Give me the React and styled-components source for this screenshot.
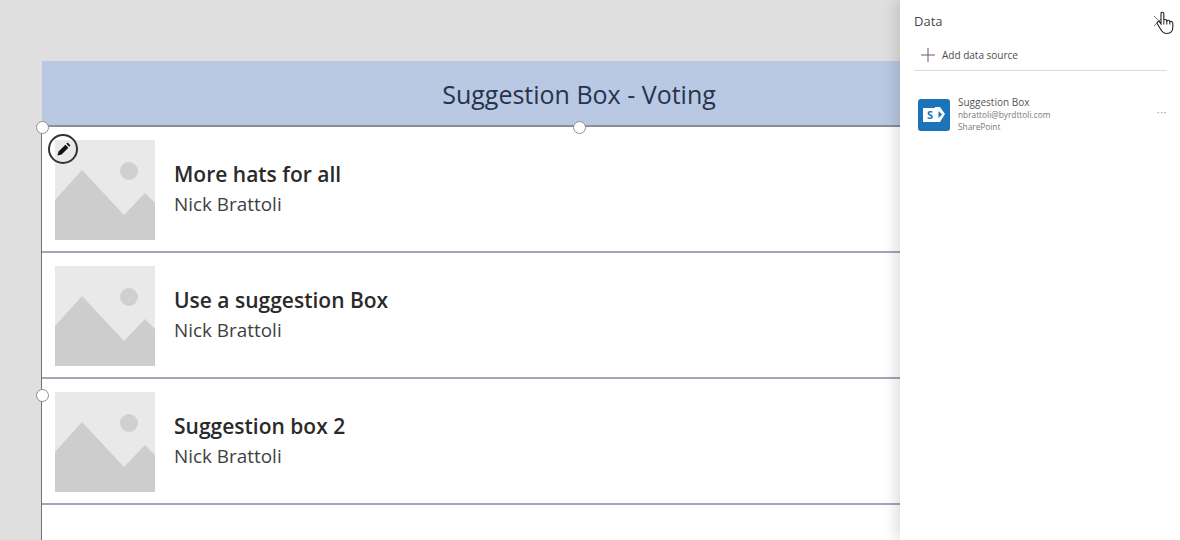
import React from "react";
import styled, { createGlobalStyle } from "styled-components";

const Global = createGlobalStyle`
  html, body { margin: 0; padding: 0; background: #dfdfdf; }
  body { font-family: "Open Sans", "Liberation Sans", sans-serif; overflow: hidden; }
`;
const Page = styled.div`
  display: flex; width: 1180px; height: 540px; overflow: hidden; background: #dfdfdf;
`;
const Canvas = styled.main`
  flex: 1; min-width: 0; padding: 61px 0 0 41px; box-sizing: border-box;
`;
const Screen = styled.div`
  position: relative; height: 479px; display: flex; flex-direction: column;
`;
const Header = styled.header`
  height: 65px; flex: none; margin-left: 1px; background: #b9c9e3; display: flex; align-items: center; justify-content: center;
  padding-left: 216px; box-sizing: border-box;
  font-size: 25px; color: #27334b; white-space: nowrap;
`;
const Gallery = styled.div`
  flex: 1; background: #fff; border-left: 1px solid #6f727a; border-top: 2px solid #8b8e99; margin-top: -1px; display: flex; flex-direction: column;
`;
const Row = styled.div`
  height: 126px; flex: none; box-sizing: border-box; border-bottom: 2px solid #a3a6b8;
  display: flex; align-items: flex-start; padding: 13px 0 0 13px; gap: 19px;
`;
const Thumb = styled.svg`
  width: 100px; height: 100px; flex: none; display: block;
`;
const RowText = styled.div`
  display: flex; flex-direction: column; padding-top: 20px;
`;
const RowTitle = styled.div`
  font-size: 21px; font-weight: 600; line-height: 28px; color: #2a2a2a; white-space: nowrap;
`;
const RowSub = styled.div`
  font-size: 18.9px; line-height: 26px; margin-top: 3px; color: #3f3f3f; white-space: nowrap;
`;
const Handle = styled.span`
  position: absolute; width: 11px; height: 11px; border-radius: 50%; background: #fff; border: 1px solid #8f8f8f;
  left: ${p => p.$x}px; top: ${p => p.$y}px;
`;
const EditBadge = styled.div`
  position: absolute; left: 7px; top: 73px; width: 30px; height: 30px; box-sizing: border-box; border-radius: 50%;
  border: 2px solid #333; display: flex; align-items: center; justify-content: center;
`;
const Panel = styled.aside`
  position: relative; width: 280px; flex: none; height: 540px; background: #fff; box-shadow: -4px 0 14px rgba(0,0,0,.14);
  padding: 0 13px 0 14px; box-sizing: border-box; color: #444;
`;
const PanelHead = styled.div`
  height: 41px; display: flex; align-items: center; justify-content: space-between; font-size: 13px; color: #4a4a4a; padding-right: 3px;
`;
const AddBar = styled.div`
  display: flex; align-items: center; gap: 7px; height: 27px; padding: 0 0 2px 7px;
  border-bottom: 1px solid #dcdcdc; font-size: 10px; color: #4d4d4d;
`;
const Source = styled.div`
  display: flex; align-items: flex-start; margin-top: 27px; padding-left: 4px; position: relative;
`;
const SourceIcon = styled.svg`
  width: 32px; height: 32px; flex: none; margin-top: 1px;
`;
const SourceText = styled.div`
  margin-left: 8px; display: flex; flex-direction: column; margin-top: -2px;
`;
const SourceName = styled.div`
  font-size: 10px; line-height: 13px; color: #555;
`;
const SourceMeta = styled.div`
  font-size: 8.3px; line-height: 11.5px; color: #777;
`;
const More = styled.div`
  position: absolute; right: 0; top: 9px; font-size: 11px; line-height: 10px; letter-spacing: .5px; color: #999;
`;
const Cursor = styled.svg`
  position: absolute; left: 255px; top: 11px; width: 20px; height: 24px;
`;

function Placeholder() {
  return (
    <Thumb viewBox="0 0 100 100">
      <rect width="100" height="100" fill="#e9e9e9" />
      <circle cx="74" cy="31" r="9" fill="#d0d0d0" />
      <path d="M0 60 L27 30 L69 75 L90 53 L100 63 V100 H0 Z" fill="#cdcdcd" />
    </Thumb>
  );
}

const rows = [
  "More hats for all",
  "Use a suggestion Box",
  "Suggestion box 2",
];

export default function App() {
  return (
    <Page>
      <Global />
      <Canvas>
        <Screen>
          <Header>Suggestion Box - Voting</Header>
          <Gallery>
            {rows.map(t => (
              <Row key={t}>
                <Placeholder />
                <RowText>
                  <RowTitle>{t}</RowTitle>
                  <RowSub>Nick Brattoli</RowSub>
                </RowText>
              </Row>
            ))}
          </Gallery>
          <Handle $x={-5} $y={60} />
          <Handle $x={532} $y={60} />
          <Handle $x={-5} $y={328} />
          <EditBadge>
            <svg width="15" height="15" viewBox="0 0 16 16">
              <path d="M1.5 14.5 L2.8 10 L10 2.8 L13.2 6 L6 13.2 Z" fill="#111" />
              <path d="M11 1.8 L12.4 .6 L15.4 3.6 L14.2 5 Z" fill="#111" />
            </svg>
          </EditBadge>
        </Screen>
      </Canvas>
      <Panel>
        <PanelHead>
          <span>Data</span>
          <svg width="10" height="10" viewBox="0 0 10 10">
            <path d="M0 0 L10 10 M10 0 L0 10" stroke="#777" strokeWidth="1" />
          </svg>
        </PanelHead>
        <AddBar>
          <svg width="14" height="14" viewBox="0 0 14 14">
            <path d="M7 0 V14 M0 7 H14" stroke="#6b5a66" strokeWidth="1" />
          </svg>
          <span>Add data source</span>
        </AddBar>
        <Source>
          <SourceIcon viewBox="0 0 32 32">
            <rect width="32" height="32" rx="3" fill="#1b73b8" />
            <path d="M17 8 L22 8 L27 15 L22 23 L17 23 Z" fill="#fff" />
            <path d="M20.5 12 L24 15.5 L20.5 19 Z" fill="#1b73b8" />
            <rect x="5" y="9" width="14" height="14" fill="#fff" />
            <text x="12" y="20" fontSize="11" fontWeight="700" textAnchor="middle" fill="#1b73b8" fontFamily="Open Sans, sans-serif">S</text>
          </SourceIcon>
          <SourceText>
            <SourceName>Suggestion Box</SourceName>
            <SourceMeta>nbrattoli@byrdttoli.com</SourceMeta>
            <SourceMeta>SharePoint</SourceMeta>
          </SourceText>
          <More>···</More>
        </Source>
        <Cursor viewBox="0 0 20 24">
          <path d="M6 2.5 C6 .8 8.8 .8 8.8 2.5 V9.5 C9.5 8 11.5 8.2 11.8 10 C12.5 8.8 14.6 9 14.8 10.8 C15.8 10 17.8 10.5 17.8 12.5 V16 C17.8 20 15.5 22.5 12 22.5 C8.5 22.5 7 21 5.5 18 L2.3 12.8 C1.5 11 3.5 9.8 4.8 11.2 L6 13 Z" fill="#fff" stroke="#222" strokeWidth="1.1" />
          <path d="M8.8 10 V13.5 M11.8 10 V13.5 M14.8 11 V13.5" stroke="#222" strokeWidth="1" fill="none" />
        </Cursor>
      </Panel>
    </Page>
  );
}
